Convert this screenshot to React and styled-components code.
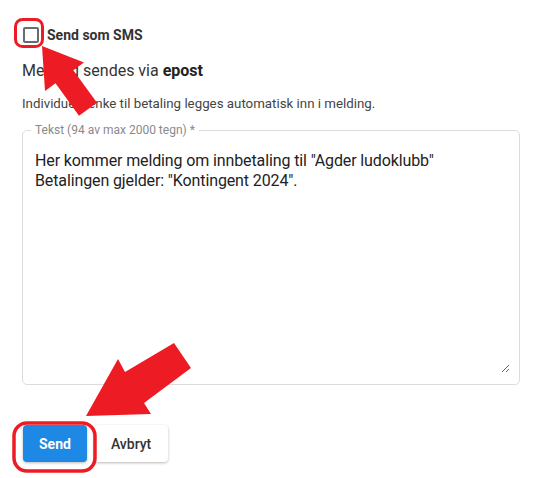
import React from "react";
import styled, { createGlobalStyle } from "styled-components";

const GlobalStyle = createGlobalStyle`
  body {
    margin: 0;
    background: #fff;
    font-family: Roboto, "Liberation Sans", Arial, sans-serif;
  }
`;

const Page = styled.div`
  position: relative;
  width: 544px;
  height: 478px;
  box-sizing: border-box;
  padding: 23px 24px 0 22px;
  color: #333;
`;

const CheckRow = styled.label`
  display: flex;
  align-items: center;
  gap: 8px;
  height: 24px;
  padding-left: 1px;
  font-size: 14px;
  font-weight: 700;
  color: #333;
`;

const Box = styled.span`
  width: 16px;
  height: 16px;
  box-sizing: border-box;
  border: 2px solid #6b6b6b;
  border-radius: 2px;
`;

const Heading = styled.div`
  margin-top: 14px;
  font-size: 16px;
  line-height: 20px;
  color: #333;
  b {
    font-weight: 700;
    color: #222;
  }
`;

const Hint = styled.div`
  margin-top: 14px;
  font-size: 13.3px;
  line-height: 17px;
  color: #444;
`;

const Field = styled.fieldset`
  margin: 11px 0 0;
  padding: 0 9px 11px 12px;
  border: 1px solid #dcdcdc;
  border-radius: 5px;
  display: flex;
`;

const Legend = styled.legend`
  margin-left: -4px;
  padding: 0 4px;
  font-size: 12px;
  line-height: 14px;
  color: #8a8a8a;
`;

const TextArea = styled.textarea`
  flex: 1;
  margin-top: 14px;
  height: 222px;
  border: none;
  outline: none;
  padding: 0;
  font-family: Roboto, "Liberation Sans", Arial, sans-serif;
  font-size: 16px;
  line-height: 20px;
  letter-spacing: -0.12px;
  color: #222;
  resize: vertical;
  background: transparent;
`;

const Actions = styled.div`
  display: flex;
  gap: 7px;
  margin-top: 40px;
  padding-left: 1px;
`;

const Button = styled.button`
  height: 37px;
  padding: 0 ${(p) => (p.$primary ? "16px" : "17px")};
  border: none;
  border-radius: 4px;
  font-family: Roboto, "Liberation Sans", Arial, sans-serif;
  font-size: 14px;
  font-weight: ${(p) => (p.$primary ? 700 : 500)};
  color: ${(p) => (p.$primary ? "#fff" : "#333")};
  background: ${(p) => (p.$primary ? "#1e88e5" : "#fff")};
  box-shadow: 0 1px 3px rgba(0, 0, 0, 0.28);
`;

const Overlay = styled.svg`
  position: absolute;
  left: 0;
  top: 0;
  pointer-events: none;
`;

const RED = "#ed1c24";

function Annotations() {
  return (
    <Overlay width="544" height="478" viewBox="0 0 544 478">
      <rect x="15.5" y="19.5" width="27" height="27" rx="7" fill="none" stroke={RED} strokeWidth="3" />
      <polygon
        fill={RED}
        points="42,46 45,91 55.5,83.3 79,115.7 97,102.7 73.3,70.3 84,62.6"
      />
      <rect x="14" y="423" width="81" height="48" rx="13" fill="none" stroke={RED} strokeWidth="3.5" />
      <polygon
        fill={RED}
        points="86,416 118,359 125,372 174,343 191,368 144,403 151,414"
      />
    </Overlay>
  );
}

export default function App() {
  return (
    <>
      <GlobalStyle />
      <Page>
        <CheckRow>
          <Box />
          Send som SMS
        </CheckRow>
        <Heading>
          Melding sendes via <b>epost</b>
        </Heading>
        <Hint>Individuell lenke til betaling legges automatisk inn i melding.</Hint>
        <Field>
          <Legend>Tekst (94 av max 2000 tegn) *</Legend>
          <TextArea
            defaultValue={'Her kommer melding om innbetaling til "Agder ludoklubb"\nBetalingen gjelder: "Kontingent 2024".'}
          />
        </Field>
        <Actions>
          <Button $primary>Send</Button>
          <Button>Avbryt</Button>
        </Actions>
        <Annotations />
      </Page>
    </>
  );
}
